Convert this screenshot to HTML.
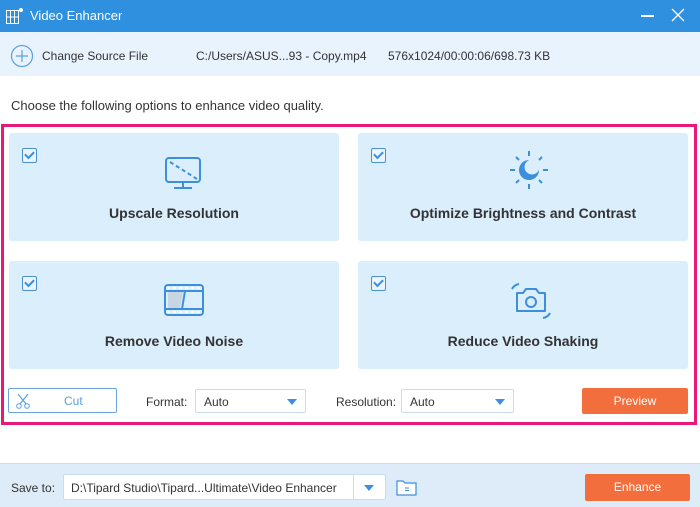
<!DOCTYPE html>
<html><head><style>
*{margin:0;padding:0;box-sizing:border-box}
body{width:700px;height:507px;background:#fff;font-family:"Liberation Sans",sans-serif;position:relative;overflow:hidden;color:#333;font-size:12px}
.a{position:absolute}
.card{position:absolute;background:#dbeefc;border-radius:3px;width:330px;height:108px}
.card .t{position:absolute;left:0;right:0;top:72px;text-align:center;font-weight:bold;font-size:14px;color:#333}
.cb{position:absolute;left:13px;top:15px;width:15px;height:15px;border:1.5px solid #4a90d0;border-radius:2px;background:#e8f4fe}
.cb:after{content:"";position:absolute;left:2px;top:1px;width:7px;height:4px;border-left:2px solid #3d8fdc;border-bottom:2px solid #3d8fdc;transform:rotate(-45deg);transform-origin:center;margin-top:1px}
.sel{position:absolute;height:24px;border:1px solid #c8dcef;background:#fff;border-radius:2px;font-size:12px;padding:5px 8px}
.tri{position:absolute;right:8px;top:9px;width:0;height:0;border-left:5px solid transparent;border-right:5px solid transparent;border-top:6px solid #3d8fdc}
.btn{position:absolute;background:#f26f3d;color:#fff;text-align:center;border-radius:2px;font-size:12px}
</style></head><body>
<div class="a" style="left:0;top:0;width:700px;height:32px;background:#2f90e0"></div>
<svg class="a" style="left:6px;top:7px" width="18" height="18"><rect x="0.5" y="3.5" width="12" height="13" fill="none" stroke="#fff"/><line x1="4.5" y1="3" x2="4.5" y2="17" stroke="#fff"/><line x1="8.5" y1="3" x2="8.5" y2="17" stroke="#fff"/><line x1="0" y1="10" x2="13" y2="10" stroke="#fff"/><circle cx="15" cy="3" r="2" fill="#fff"/></svg>
<div class="a" style="left:30px;top:8px;color:#fff;font-size:13px">Video Enhancer</div>
<div class="a" style="left:641px;top:15px;width:13px;height:1.5px;background:#fff"></div>
<svg class="a" style="left:671px;top:8px" width="14" height="14"><path d="M1 1L13 13M13 1L1 13" stroke="#fff" stroke-width="1.3"/></svg>
<div class="a" style="left:0;top:32px;width:700px;height:44px;background:#e8f3fd"></div>
<svg class="a" style="left:10px;top:44px" width="24" height="24"><circle cx="12" cy="12" r="10.5" fill="none" stroke="#5aa0e0" stroke-width="1.2"/><path d="M12 6V18M6 12H18" stroke="#5aa0e0" stroke-width="1.2"/></svg>
<div class="a" style="left:42px;top:49px">Change Source File</div>
<div class="a" style="left:196px;top:49px">C:/Users/ASUS...93 - Copy.mp4</div>
<div class="a" style="left:388px;top:49px">576x1024/00:00:06/698.73 KB</div>
<div class="a" style="left:11px;top:98px;font-size:13px">Choose the following options to enhance video quality.</div>
<div class="a" style="left:1px;top:124px;width:696px;height:301px;border:3px solid #e8187a"></div>
<div class="card" style="left:9px;top:133px"><div class="cb"></div>
<svg class="a" style="left:155px;top:23px" width="38" height="34"><rect x="2" y="2" width="34" height="24" rx="3" fill="none" stroke="#3d8fdc" stroke-width="2"/><path d="M6 6L33 23" stroke="#3d8fdc" stroke-width="2" stroke-dasharray="4 3"/><path d="M19 26V31M10 32H28" stroke="#3d8fdc" stroke-width="2"/></svg>
<div class="t">Upscale Resolution</div></div>
<div class="card" style="left:358px;top:133px"><div class="cb"></div>
<svg class="a" style="left:150px;top:16px" width="42" height="42"><g stroke="#3d8fdc" stroke-width="2"><path d="M21 2V7M21 35V40M2 21H7M35 21H40M8 8L11 11M31 31L34 34M34 8L31 11M8 34L11 31"/></g><circle cx="21" cy="21" r="10" fill="#3d8fdc"/><circle cx="24" cy="18" r="7.5" fill="#dbeefc"/></svg>
<div class="t">Optimize Brightness and Contrast</div></div>
<div class="card" style="left:9px;top:261px"><div class="cb"></div>
<svg class="a" style="left:154px;top:22px" width="42" height="34"><rect x="2" y="2" width="38" height="30" rx="3" fill="none" stroke="#3d8fdc" stroke-width="2"/><path d="M2 8H40M2 26H40" stroke="#3d8fdc" stroke-width="2"/><path d="M4 5H38M4 29H38" stroke="#fff" stroke-width="1.5" stroke-dasharray="3 3"/><path d="M5 9H20L17 25H5Z" fill="#c8d6e4"/><path d="M22 8L19 26" stroke="#3d8fdc" stroke-width="2"/></svg>
<div class="t">Remove Video Noise</div></div>
<div class="card" style="left:358px;top:261px"><div class="cb"></div>
<svg class="a" style="left:152px;top:20px" width="42" height="40"><path d="M2 8Q4 4 9 3" fill="none" stroke="#3d8fdc" stroke-width="2"/><path d="M40 32Q38 36 33 37" fill="none" stroke="#3d8fdc" stroke-width="2"/><path d="M7 12H13L16 8H26L29 12H35V30H7Z" fill="none" stroke="#3d8fdc" stroke-width="2" stroke-linejoin="round"/><circle cx="21" cy="21" r="5" fill="none" stroke="#3d8fdc" stroke-width="2"/></svg>
<div class="t">Reduce Video Shaking</div></div>
<div class="a" style="left:8px;top:388px;width:109px;height:25px;border:1px solid #6aa6dc;border-radius:2px;background:#fff"></div>
<svg class="a" style="left:15px;top:393px" width="16" height="16"><path d="M3 1L11 11M13 1L5 11" stroke="#5aa0e0" stroke-width="1.2"/><circle cx="4" cy="13" r="2.3" fill="none" stroke="#5aa0e0"/><circle cx="12" cy="13" r="2.3" fill="none" stroke="#5aa0e0"/></svg>
<div class="a" style="left:64px;top:394px;color:#5aa0e0">Cut</div>
<div class="a" style="left:146px;top:395px">Format:</div>
<div class="sel" style="left:195px;top:389px;width:111px">Auto<div class="tri"></div></div>
<div class="a" style="left:336px;top:395px">Resolution:</div>
<div class="sel" style="left:401px;top:389px;width:113px">Auto<div class="tri"></div></div>
<div class="btn" style="left:582px;top:388px;width:106px;height:26px;line-height:26px">Preview</div>
<div class="a" style="left:0;top:463px;width:700px;height:44px;background:#deecf9;border-top:1px solid #c9def2"></div>
<div class="a" style="left:11px;top:481px">Save to:</div>
<div class="sel" style="left:63px;top:474px;width:323px;height:26px;padding:6px 7px">D:\Tipard Studio\Tipard...Ultimate\Video Enhancer<div class="a" style="right:0;top:0;width:32px;height:24px;border-left:1px solid #c8dcef"></div><div class="tri" style="right:11px;top:10px"></div></div>
<svg class="a" style="left:396px;top:478px" width="22" height="18"><path d="M1 3H7L9 5H20V17H1Z" fill="#fff" stroke="#3d8fdc" stroke-width="1.2"/><path d="M9 10H13M9 12.5H13" stroke="#3d8fdc"/></svg>
<div class="btn" style="left:585px;top:474px;width:105px;height:27px;line-height:27px">Enhance</div>
</body></html>
